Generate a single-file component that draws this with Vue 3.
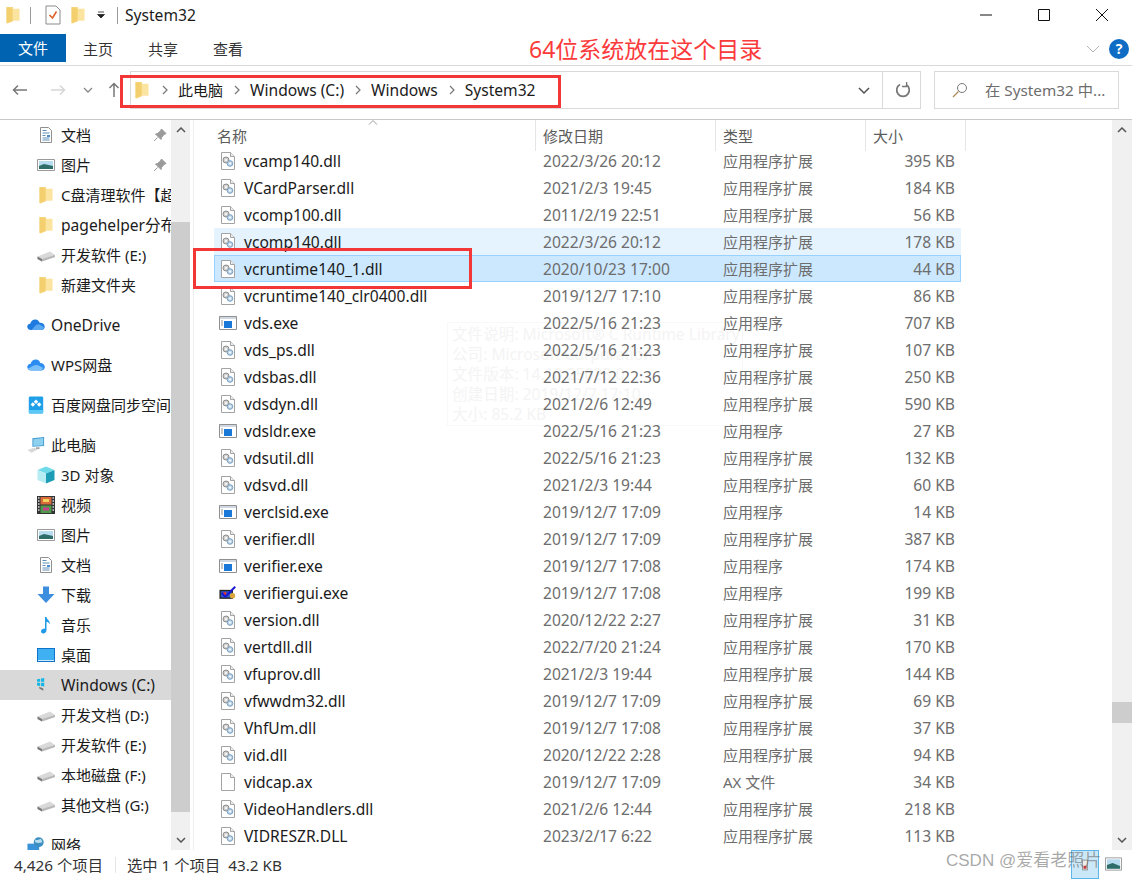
<script setup>
const navItems = [
  { icon: 'doc', label: '文档', pin: true, indent: 1 },
  { icon: 'pic', label: '图片', pin: true, indent: 1 },
  { icon: 'folder', label: 'C盘清理软件【超', indent: 1 },
  { icon: 'folder', label: 'pagehelper分布', indent: 1, lat: true },
  { icon: 'drive', label: '开发软件 (E:)', indent: 1 },
  { icon: 'folder', label: '新建文件夹', indent: 1 },
  { gap: true },
  { icon: 'cloud', label: 'OneDrive', indent: 0, lat: true },
  { gap: true },
  { icon: 'wps', label: 'WPS网盘', indent: 0 },
  { gap: true },
  { icon: 'baidu', label: '百度网盘同步空间', indent: 0 },
  { gap: true },
  { icon: 'pc', label: '此电脑', indent: 0 },
  { icon: 'cube', label: '3D 对象', indent: 1 },
  { icon: 'film', label: '视频', indent: 1 },
  { icon: 'pic', label: '图片', indent: 1 },
  { icon: 'doc', label: '文档', indent: 1 },
  { icon: 'down', label: '下载', indent: 1 },
  { icon: 'music', label: '音乐', indent: 1 },
  { icon: 'desk', label: '桌面', indent: 1 },
  { icon: 'cdrive', label: 'Windows (C:)', indent: 1, active: true, lat: true },
  { icon: 'drive', label: '开发文档 (D:)', indent: 1 },
  { icon: 'drive', label: '开发软件 (E:)', indent: 1 },
  { icon: 'drive', label: '本地磁盘 (F:)', indent: 1 },
  { icon: 'drive', label: '其他文档 (G:)', indent: 1 },
  { gap: true },
  { icon: 'net', label: '网络', indent: 0 }
]

const ext = '应用程序扩展'
const app = '应用程序'
const files = [
  ['dll', 'vcamp140.dll', '2022/3/26 20:12', ext, '395 KB'],
  ['dll', 'VCardParser.dll', '2021/2/3 19:45', ext, '184 KB'],
  ['dll', 'vcomp100.dll', '2011/2/19 22:51', ext, '56 KB'],
  ['dll', 'vcomp140.dll', '2022/3/26 20:12', ext, '178 KB', 'hover'],
  ['dll', 'vcruntime140_1.dll', '2020/10/23 17:00', ext, '44 KB', 'sel'],
  ['dll', 'vcruntime140_clr0400.dll', '2019/12/7 17:10', ext, '86 KB'],
  ['exe', 'vds.exe', '2022/5/16 21:23', app, '707 KB'],
  ['dll', 'vds_ps.dll', '2022/5/16 21:23', ext, '107 KB'],
  ['dll', 'vdsbas.dll', '2021/7/12 22:36', ext, '250 KB'],
  ['dll', 'vdsdyn.dll', '2021/2/6 12:49', ext, '590 KB'],
  ['exe', 'vdsldr.exe', '2022/5/16 21:23', app, '27 KB'],
  ['dll', 'vdsutil.dll', '2022/5/16 21:23', ext, '132 KB'],
  ['dll', 'vdsvd.dll', '2021/2/3 19:44', ext, '60 KB'],
  ['exe', 'verclsid.exe', '2019/12/7 17:09', app, '14 KB'],
  ['dll', 'verifier.dll', '2019/12/7 17:09', ext, '387 KB'],
  ['exe', 'verifier.exe', '2019/12/7 17:08', app, '174 KB'],
  ['vgui', 'verifiergui.exe', '2019/12/7 17:08', app, '199 KB'],
  ['dll', 'version.dll', '2020/12/22 2:27', ext, '31 KB'],
  ['dll', 'vertdll.dll', '2022/7/20 21:24', ext, '170 KB'],
  ['dll', 'vfuprov.dll', '2021/2/3 19:44', ext, '144 KB'],
  ['dll', 'vfwwdm32.dll', '2019/12/7 17:09', ext, '69 KB'],
  ['dll', 'VhfUm.dll', '2019/12/7 17:08', ext, '37 KB'],
  ['dll', 'vid.dll', '2020/12/22 2:28', ext, '94 KB'],
  ['blank', 'vidcap.ax', '2019/12/7 17:09', 'AX 文件', '34 KB'],
  ['dll', 'VideoHandlers.dll', '2021/2/6 12:44', ext, '218 KB'],
  ['dll', 'VIDRESZR.DLL', '2023/2/17 6:22', ext, '113 KB']
].map(([icon, name, date, type, size, state]) => ({ icon, name, date, type, size, state }))

const crumbs = [
  { text: '此电脑' },
  { text: 'Windows (C:)', lat: true },
  { text: 'Windows', lat: true },
  { text: 'System32', lat: true }
]
const tips = [
  '文件说明: Microsoft® C Runtime Library',
  '公司: Microsoft Corporation',
  '文件版本: 14.10.25028.0',
  '创建日期: 2019/12/7 17:10',
  '大小: 85.2 KB'
]
</script>

<template>
  <div class="win">
    <svg class="defs" width="0" height="0">
      <defs>
        <symbol id="i-folder" viewBox="1 1.500 16 16.500">
          <path d="M3 2.500h6v13l-5 2-1-.4z" fill="#f6d77f" />
          <path d="M9 4h6v11H9z" fill="#fbe3a0" />
          <path d="M3 2.500v14.600l5-2V4z" fill="#f2c85f" opacity=".55" />
        </symbol>
        <symbol id="i-doc" viewBox="0 0 18 18">
          <path d="M3.500 1.500h8l3 3v12h-11z" fill="#fff" stroke="#8f8f8f" />
          <path d="M5.500 4.500h4M5.500 7h7M5.500 9.500h3M5.500 12h7M5.500 14h7" stroke="#5f8fb8" />
          <path d="M10 9h3v2h-3z" fill="#4a90d0" />
        </symbol>
        <symbol id="i-pic" viewBox="0 0 18 18">
          <path d="M.5 3.500h17v11H.5z" fill="#fff" stroke="#9a9a9a" />
          <path d="M2 5h14v8H2z" fill="#b7dcf0" />
          <path d="M2 10l5-2 9 2v3H2z" fill="#2f6d6a" />
        </symbol>
        <symbol id="i-drive" viewBox="0 0 18 18">
          <path d="M.5 10.500 13 5.500l5 3.500v2L5 15.500.5 13z" fill="#d9d9d9" />
          <path d="M.5 10.500 5 13v2.500L.5 13z" fill="#777" />
          <path d="M5 13l13-4v2L5 15.500z" fill="#b9b9b9" />
        </symbol>
        <symbol id="i-cdrive" viewBox="0 0 20 18">
          <path d="M2.500 11 15 6.500l5 3v2L7 15.500 2.500 13z" fill="#d9d9d9" />
          <path d="M2.500 11 7 13v2.500L2.500 13z" fill="#777" />
          <path d="M0 2.500 3.500 2v3.500H0zM4.500 1.800 8 1.200v4.300H4.500zM0 6.500h3.500V10L0 9.500zM4.500 6.500H8v4.300l-3.500-.6z" fill="#14b6e6" />
        </symbol>
        <symbol id="i-cloud" viewBox="0 0 20 14">
          <path d="M4.500 12.500C1.800 12.500.3 11 .3 9c0-2 1.500-3.300 3.200-3.300C4.500 2.500 7 .8 9.500 1c2.200.2 3.800 1.500 4.500 3.500 3-.3 5.700 1.500 5.700 4.500 0 2-1.500 3.500-3.500 3.500z" fill="#1f7ae0" />
          <path d="M5 12.500 10 7c2-1.500 4-1 6 .5l3 2c-.3 1.800-1.500 3-3.500 3z" fill="#5aa8f0" />
        </symbol>
        <symbol id="i-wps" viewBox="0 0 20 14">
          <path d="M4.500 13C2 13 .3 11.300.3 9.200.3 7 2 5.500 4 5.500 5 2.500 7.500.8 10 1c2.500.2 4.200 1.800 4.800 3.800 2.800.1 5 1.900 5 4.400 0 2.200-1.700 3.800-4 3.800z" fill="#2d8cf0" />
          <path d="M1 11c3-1 6-4 9-4s5 2 8 3c-.8 2-2 3-3.500 3h-10C3 13 1.800 12.400 1 11z" fill="#7cc0fa" />
        </symbol>
        <symbol id="i-baidu" viewBox="0 0 18 20">
          <path d="M1 2a1.500 1.500 0 0 1 1.500-1.500h13A1.500 1.500 0 0 1 17 2v16a1.500 1.500 0 0 1-1.500 1.500h-13A1.500 1.500 0 0 1 1 18z" fill="#1e9fe8" />
          <path d="M1 15.500h16V18a1.500 1.500 0 0 1-1.500 1.500h-13A1.500 1.500 0 0 1 1 18z" fill="#5cc8f5" />
          <path d="M9 4l2.500 2.500L9 9 6.500 6.500zM5.500 7l2.500 2.500L5.500 12 3 9.500zM12.500 7 15 9.500 12.500 12 10 9.500z" fill="#fff" />
        </symbol>
        <symbol id="i-pc" viewBox="0 0 20 20">
          <path d="M6 2.500 19 1v10L6 12z" fill="#3f9ad1" />
          <path d="M7 3.500 18 2.300v8L7 11z" fill="#8fd0ef" />
          <path d="M.5 15.500 8 13l4 2-7 3.500z" fill="#d8d8d8" />
          <path d="M10 12.500h4v2h-4z" fill="#a9a9a9" />
        </symbol>
        <symbol id="i-cube" viewBox="0 0 18 18">
          <path d="M9 .5 17.500 4 9 7.500.5 4z" fill="#6fdbe8" />
          <path d="M.5 4 9 7.500v10L.5 14z" fill="#b6ecf2" />
          <path d="M17.500 4 9 7.500v10l8.500-3.500z" fill="#1c9db5" />
        </symbol>
        <symbol id="i-film" viewBox="0 0 18 18">
          <path d="M0 0h18v18H0z" fill="#333" />
          <path d="M3.500 1h11v7.500h-11z" fill="#d96a3c" />
          <path d="M3.500 9.500h11V17h-11z" fill="#4f9a4c" />
          <path d="M6 3h6v3H6z" fill="#f2d35c" />
          <path d="M6 11.500h6v3H6z" fill="#c9408c" />
          <path d="M1 2h1.500M1 5h1.500M1 8h1.500M1 11h1.500M1 14h1.500M15.500 2H17M15.500 5H17M15.500 8H17M15.500 11H17M15.500 14H17" stroke="#ddd" stroke-width="1.500" />
        </symbol>
        <symbol id="i-down" viewBox="0 0 18 18">
          <path d="M6 .5h6V8h5.500L9 17 .5 8H6z" fill="#3d8ede" />
        </symbol>
        <symbol id="i-music" viewBox="0 0 18 18">
          <path d="M8 1h1.500c.3 2.500 3.800 3.500 3.300 7.500C12 6.500 10.800 6 9.500 5.700V14c0 2-1.500 3.500-3.300 3.500C4.700 17.500 4 16.500 4 15.300c0-1.500 1.700-2.800 4-2.800z" fill="#1f9bea" />
        </symbol>
        <symbol id="i-desk" viewBox="0 0 18 14">
          <path d="M0 0h18v14H0z" fill="#0f74c9" />
          <path d="M1 1h16v11H1z" fill="#3fb0f2" />
          <path d="M1 12.500h16" stroke="#cfe9fa" />
        </symbol>
        <symbol id="i-net" viewBox="0 0 20 18">
          <path d="M.5 7.500h13V17H.5z" fill="#3a92d8" />
          <circle cx="13" cy="6" r="5.500" fill="#3e8fc2" />
          <path d="M9 3c2 1 4 0 6-1 1 1 2 3 2 4-3 1-5 1-8 0z" fill="#b5dded" />
        </symbol>
        <symbol id="i-dll" viewBox="0 0 18 18">
          <path d="M2.500 .5h9l4 4v13h-13z" fill="#fff" stroke="#a3a3a3" />
          <path d="M11.500 .5v4h4" fill="#eee" stroke="#a3a3a3" />
          <circle cx="7" cy="8" r="3" fill="#d0d0d0" stroke="#8c8c8c" />
          <circle cx="7" cy="8" r="1" fill="#fff" />
          <circle cx="11" cy="11.500" r="2.800" fill="#bcd4ea" stroke="#7a9ebd" />
          <circle cx="11" cy="11.500" r="1" fill="#fff" />
        </symbol>
        <symbol id="i-blank" viewBox="0 0 18 18">
          <path d="M2.500 .5h9l4 4v13h-13z" fill="#fff" stroke="#a3a3a3" />
          <path d="M11.500 .5v4h4" fill="#f2f2f2" stroke="#a3a3a3" />
        </symbol>
        <symbol id="i-exe" viewBox="0 0 18 18">
          <path d="M.5 2.500h17v13H.5z" fill="#fff" stroke="#8f8f8f" />
          <path d="M1 3h16v2H1z" fill="#cfd8e3" />
          <path d="M5 7h8v7H5z" fill="#1a78d8" />
          <path d="M2 7h2M2 9h2M2 11h2" stroke="#8f8f8f" />
        </symbol>
        <symbol id="i-vgui" viewBox="0 0 20 18">
          <path d="M.5 5.500h15v10H.5z" fill="#222" />
          <path d="M2 7h12v7H2z" fill="#2b55c9" />
          <path d="M5 8h3v4H5z" fill="#d33" />
          <path d="M3 9l4 4 11-11" fill="none" stroke="#1818d0" stroke-width="2.200" />
          <circle cx="15" cy="12" r="3" fill="#dba63a" />
        </symbol>
      </defs>
    </svg>

    <header class="titlebar">
      <div class="qa">
        <svg class="ic18"><use href="#i-folder" /></svg>
        <span class="vsep"></span>
        <svg class="check" viewBox="0 0 16 20" width="16" height="20">
          <path d="M1 1h10l4 4v14H1z" fill="#fff" stroke="#8a8a8a" />
          <path d="M4.500 10l3 3 4-6.500" fill="none" stroke="#e0602a" stroke-width="1.600" />
        </svg>
        <svg class="ic18 qf"><use href="#i-folder" /></svg>
        <svg class="caret" viewBox="0 0 8 8" width="8" height="8">
          <path d="M1 1h6M.5 3.500h7L4 7z" stroke="#222" fill="#222" stroke-width=".8" />
        </svg>
        <span class="vsep last"></span>
        <span class="wtitle">System32</span>
      </div>
      <div class="wctl">
        <svg viewBox="0 0 12 12" width="12" height="12"><path d="M0 6h12" stroke="#111" /></svg>
        <svg viewBox="0 0 12 12" width="12" height="12"><path d="M.5 .5h11v11H.5z" fill="none" stroke="#111" /></svg>
        <svg viewBox="0 0 12 12" width="12" height="12"><path d="M0 0l12 12M12 0 0 12" stroke="#111" /></svg>
      </div>
    </header>

    <nav class="ribbon">
      <span class="filetab">文件</span>
      <span class="tab t1">主页</span>
      <span class="tab">共享</span>
      <span class="tab">查看</span>
      <span class="note">64位系统放在这个目录</span>
      <svg class="rchev" viewBox="0 0 14 8" width="14" height="8"><path d="M1 1l6 6 6-6" fill="none" stroke="#b5b5b5" /></svg>
      <span class="help">?</span>
    </nav>

    <section class="addr">
      <div class="navs">
        <svg viewBox="0 0 16 12" width="16" height="12"><path d="M15 6H1.500M6 1.500 1.500 6 6 10.500" fill="none" stroke="#777" stroke-width="1.500" /></svg>
        <svg viewBox="0 0 16 12" width="16" height="12"><path d="M1 6h13.500M10 1.500 14.500 6 10 10.500" fill="none" stroke="#d6d6d6" stroke-width="1.500" /></svg>
        <svg viewBox="0 0 10 6" width="10" height="6"><path d="M1 1l4 4 4-4" fill="none" stroke="#888" stroke-width="1.300" /></svg>
        <svg viewBox="0 0 12 16" width="12" height="16"><path d="M6 15V1.500M1.500 6 6 1.500 10.500 6" fill="none" stroke="#777" stroke-width="1.500" /></svg>
      </div>
      <div class="path">
        <svg class="ic18 pf"><use href="#i-folder" /></svg>
        <template v-for="c in crumbs" :key="c.text">
          <svg class="sep" viewBox="0 0 6 10" width="6" height="10"><path d="M1 1l4 4-4 4" fill="none" stroke="#777" stroke-width="1.200" /></svg>
          <span class="crumb" :class="{ lat: c.lat }">{{ c.text }}</span>
        </template>
        <span class="pspace"></span>
        <svg class="pdrop" viewBox="0 0 12 7" width="12" height="7"><path d="M1 1l5 5 5-5" fill="none" stroke="#555" stroke-width="1.500" /></svg>
        <span class="refresh">
          <svg viewBox="0 0 16 16" width="16" height="16"><path d="M11 2.600A6.300 6.300 0 1 1 5 2.600" fill="none" stroke="#777" stroke-width="1.700" /><path d="M11.600 0v4.500H7" fill="none" stroke="#777" stroke-width="1.300" /></svg>
        </span>
      </div>
      <div class="search">
        <svg viewBox="0 0 16 16" width="16" height="16"><circle cx="10" cy="6" r="4.500" fill="none" stroke="#777" /><path d="M6.500 9.500 1 15" stroke="#b08a5a" stroke-width="1.200" /></svg>
        <span>在 System32 中...</span>
      </div>
    </section>

    <main class="body">
      <aside class="side">
        <div class="tree">
          <template v-for="(n, i) in navItems" :key="i">
            <div v-if="n.gap" class="tgap"></div>
            <div v-else class="node" :class="{ active: n.active, in1: n.indent === 1 }">
              <svg class="nic"><use :href="'#i-' + n.icon" /></svg>
              <span class="nlabel" :class="{ lat: n.lat }">{{ n.label }}</span>
              <svg v-if="n.pin" class="pin" viewBox="0 0 14 14" width="14" height="14"><path d="M8.500 1 13 5.500l-2 1-2.500 3-.5 2L2.500 6l2-.5 3-2.500zM4.500 9.500 1 13" fill="#9a9a9a" stroke="#9a9a9a" /></svg>
            </div>
          </template>
        </div>
        <div class="sbar">
          <svg class="arr" viewBox="0 0 10 6" width="10" height="6"><path d="M1 5l4-4 4 4" fill="none" stroke="#555" stroke-width="1.500" /></svg>
          <div class="sthumb"></div>
          <svg class="arr" viewBox="0 0 10 6" width="10" height="6"><path d="M1 1l4 4 4-4" fill="none" stroke="#555" stroke-width="1.500" /></svg>
        </div>
      </aside>

      <section class="list">
        <div class="cols">
          <div class="head">
            <span class="h name">名称</span>
            <span class="h date">修改日期</span>
            <span class="h type">类型</span>
            <span class="h size">大小</span>
            <svg class="sort" viewBox="0 0 10 5" width="10" height="5"><path d="M1 4.500l4-4 4 4" fill="none" stroke="#999" /></svg>
          </div>
          <div class="rows">
            <div class="tip"><div v-for="t in tips" :key="t">{{ t }}</div></div>
            <div class="rowsin">
              <div v-for="f in files" :key="f.name" class="row" :class="f.state">
                <span class="cell name">
                  <svg class="fic"><use :href="'#i-' + f.icon" /></svg>
                  <span class="fname">{{ f.name }}</span>
                </span>
                <span class="cell date">{{ f.date }}</span>
                <span class="cell type">{{ f.type }}</span>
                <span class="cell size">{{ f.size }}</span>
              </div>
            </div>
          </div>
        </div>
        <div class="mbar">
          <svg class="arr" viewBox="0 0 10 6" width="10" height="6"><path d="M1 5l4-4 4 4" fill="none" stroke="#555" stroke-width="1.500" /></svg>
          <div class="mtrack"><div class="mthumb"></div></div>
          <svg class="arr" viewBox="0 0 10 6" width="10" height="6"><path d="M1 1l4 4 4-4" fill="none" stroke="#555" stroke-width="1.500" /></svg>
        </div>
      </section>
    </main>

    <footer class="status">
      <span class="count">4,426 个项目</span>
      <span class="stsep"></span>
      <span>选中 1 个项目&nbsp;&nbsp;43.2 KB</span>
    </footer>

    <!-- overlays -->
    <div class="mark addrmark"></div>
    <div class="mark rowmark"></div>
    <div class="thumb">
      <svg viewBox="0 0 8 14" width="6" height="12"><path d="M.5 .5h7v13h-7z" fill="#eee" stroke="#777" /><path d="M2 8h4v4H2z" fill="#c33" /></svg>
    </div>
    <svg class="viewic" viewBox="0 0 18 14" width="17" height="14"><path d="M.5 .5h17v13H.5z" fill="#fff" stroke="#999" /><path d="M2 2h14v10H2z" fill="#b7dcf0" /><path d="M2 8l6-2 8 3v3H2z" fill="#2f6d6a" /></svg>
    <div class="wm">CSDN @爱看老照片</div>
  </div>
</template>

<style>
html, body { margin: 0; background: #fff; }
</style>

<style scoped>
.win {
  position: relative;
  width: 1132px;
  height: 880px;
  overflow: hidden;
  background: #fff;
  color: #1b1b1b;
  font: 15px/20px "Noto Sans", "Noto Sans CJK SC", sans-serif;
  display: flex;
  flex-direction: column;
}
.defs { position: absolute; }
.ic18 { width: 18px; height: 18px; display: block; }
.lat { font-size: 15.600px; }

.titlebar { height: 34px; box-sizing: border-box; padding-bottom: 4px; display: flex; justify-content: space-between; align-items: center; flex: none; }
.qa { display: flex; align-items: center; padding-left: 4px; }
.vsep { width: 1px; height: 17px; background: #9a9a9a; margin: 0 14px 0 8px; }
.vsep.last { margin: 0 7px 0 12px; }
.check { display: block; }
.qf { margin-left: 8px; }
.caret { margin-left: 10px; }
.wtitle { font-size: 15.600px; }
.wctl { display: flex; gap: 46px; padding-right: 24px; }

.ribbon { height: 32px; display: flex; align-items: flex-start; flex: none; border-bottom: 1px solid #dadada; box-sizing: border-box; position: relative; }
.filetab { width: 66px; height: 28px; background: #0063b1; color: #fff; text-align: center; line-height: 28px; }
.tab { margin-left: 19px; width: 46px; line-height: 30px; text-align: left; color: #333; }
.tab.t1 { margin-left: 17px; }
.note { position: absolute; left: 529px; top: 0; color: #fb3b3b; font-size: 23px; line-height: 30px; white-space: nowrap; }
.rchev { position: absolute; left: 1086px; top: 11px; }
.help { position: absolute; left: 1109px; top: 5px; width: 20px; height: 20px; border-radius: 50%; background: #0f6cc4; color: #fff; text-align: center; font-weight: 700; font-size: 14px; line-height: 20px; }

.addr { height: 54px; flex: none; box-sizing: border-box; padding: 5px 13px 5px 0; display: flex; align-items: flex-start; border-bottom: 1px solid #c8c8c8; }
.navs { width: 130px; height: 38px; display: flex; align-items: center; flex: none; box-sizing: border-box; padding-left: 12px; }
.navs svg:nth-child(2) { margin-left: 22px; }
.navs svg:nth-child(3) { margin-left: 17px; }
.navs svg:nth-child(4) { margin-left: 15px; }
.path { width: 791px; height: 38px; box-sizing: border-box; border: 1px solid #d9d9d9; display: flex; align-items: center; flex: none; padding-left: 2px; }
.pf { margin-right: 10px; }
.sep { margin: 0 10px 0 1px; }
.crumb { margin-right: 10px; }
.pspace { flex: 1; }
.pdrop { margin-right: 12px; }
.refresh { width: 38px; height: 36px; border-left: 1px solid #d9d9d9; display: flex; align-items: center; justify-content: center; padding-left: 2px; box-sizing: border-box; }
.search { width: 185px; height: 38px; margin-left: 13px; box-sizing: border-box; border: 1px solid #d9d9d9; display: flex; align-items: center; gap: 17px; padding-left: 17px; color: #6d6d6d; font-size: 15.300px; flex: none; white-space: nowrap; }

.body { flex: 1; display: flex; min-height: 0; }
.side { width: 190px; flex: none; display: flex; }
.tree { width: 171px; overflow: hidden; flex: none; }
.node { height: 30px; display: flex; align-items: center; padding-left: 27px; white-space: nowrap; position: relative; overflow: hidden; }
.node.in1 { padding-left: 37px; }
.node.active { background: #d9d9d9; }
.nic { width: 18px; height: 18px; flex: none; margin-right: 6px; }
.nlabel { flex: none; }
.pin { position: absolute; left: 153px; top: 8px; }
.tgap { height: 10px; }
.sbar, .mbar { width: 19px; flex: none; background: #f0f0f0; display: flex; flex-direction: column; align-items: center; position: relative; }
.arr { flex: none; margin: 7px 0; }
.sthumb { width: 100%; flex: none; height: 590px; margin-top: 82px; margin-bottom: 18px; background: #cdcdcd; }

.list { flex: 1; display: flex; min-width: 0; border-left: 1px solid #eee; margin-left: 3px; }
.cols { flex: 1; min-width: 0; display: flex; flex-direction: column; position: relative; }
.head { height: 32px; display: flex; flex: none; position: relative; padding-left: 17px; color: #5c5c5c; }
.h { box-sizing: border-box; border-right: 1px solid #e5e5e5; line-height: 30px; height: 31px; padding-top: 1px; padding-left: 7px; }
.h.name { width: 325px; padding-left: 6px; }
.h.date { width: 180px; }
.h.type { width: 150px; }
.h.size { width: 100px; }
.sort { position: absolute; left: 174px; top: 0; }
.rows { flex: 1; overflow: hidden; min-height: 0; position: relative; }
.rowsin { margin-top: -5px; margin-left: 20px; width: 747px; position: relative; }
.row { height: 27px; box-sizing: border-box; display: flex; align-items: center; border: 1px solid transparent; }
.row.hover { background: #e5f3ff; }
.row.sel { background: #cce8ff; border-color: #99d1ff; }
.cell { white-space: nowrap; font-size: 15.600px; color: #6d6d6d; }
.cell.name { width: 328px; display: flex; align-items: center; color: #1b1b1b; flex: none; padding-left: 4px; box-sizing: border-box; }
.fic { width: 18px; height: 18px; flex: none; margin-right: 7px; }
.cell.date { width: 180px; flex: none; }
.cell.type { width: 150px; flex: none; font-size: 15px; }
.cell.size { width: 82px; flex: none; text-align: right; }
.mbar { width: 20px; }
.mtrack { flex: 1; width: 100%; position: relative; }
.mthumb { position: absolute; top: 562px; width: 100%; height: 21px; background: #cdcdcd; }

.status { height: 30px; flex: none; display: flex; align-items: center; padding-left: 14px; font-size: 15.300px; color: #333; }
.count { width: 101px; flex: none; white-space: nowrap; }
.stsep { width: 1px; height: 16px; background: #e5e5e5; margin: 0 11px 0 0; }

.mark { position: absolute; border: 3px solid #f33737; box-sizing: border-box; }
.addrmark { left: 120px; top: 75px; width: 441px; height: 33px; }
.rowmark { left: 193px; top: 248px; width: 279px; height: 41px; }
.tip { position: absolute; left: 253px; top: 170px; width: 296px; height: 104px; box-sizing: border-box; border: 1px solid #f8f8f8; padding: 1px 4px; font-size: 15.600px; line-height: 20px; color: #f4f4f4; white-space: nowrap; overflow: hidden; }
.thumb { position: absolute; left: 1071px; top: 850px; width: 28px; height: 29px; box-sizing: border-box; background: #cbe8f9; border: 1px solid #5db6ea; display: flex; align-items: center; justify-content: center; }
.viewic { position: absolute; left: 1105px; top: 857px; }
.wm { position: absolute; left: 946px; top: 849px; color: rgba(110,110,110,.6); font: 17px/24px "Liberation Sans", "Noto Sans CJK SC", sans-serif; white-space: nowrap; }
</style>
